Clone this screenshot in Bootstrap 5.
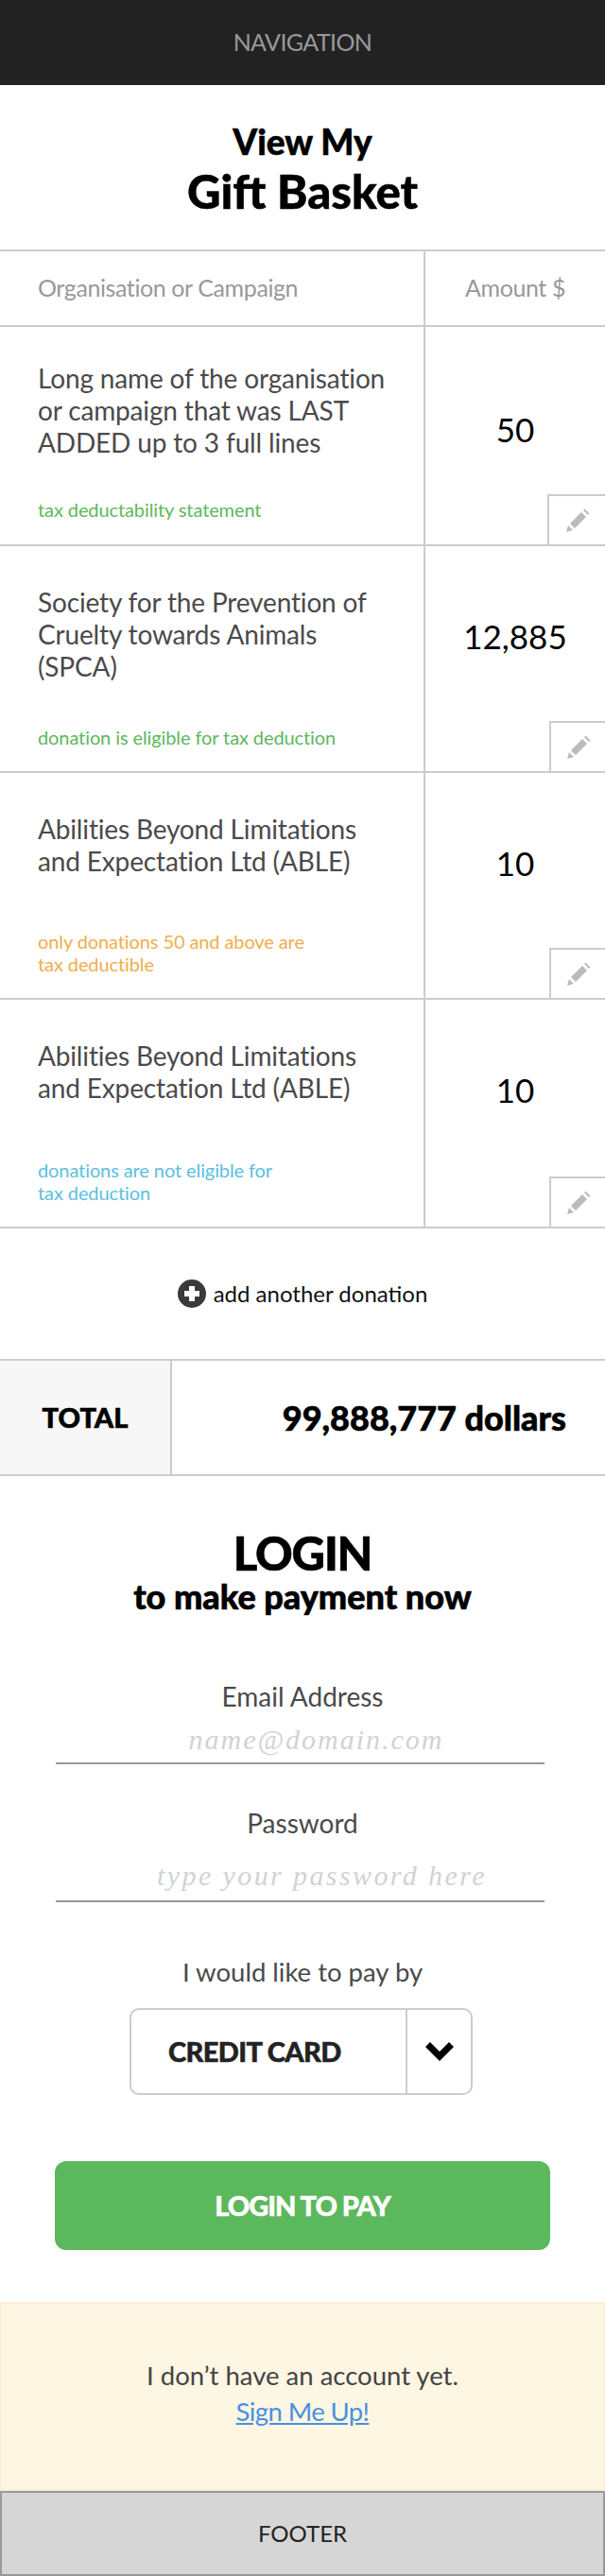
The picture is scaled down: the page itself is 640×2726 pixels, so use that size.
<!DOCTYPE html>
<html lang="en">

<head>
    <meta charset="UTF-8">
    <meta name="viewport" content="width=device-width, initial-scale=1.0">
    <title>View My Gift Basket</title>
    <link href="https://cdn.jsdelivr.net/npm/bootstrap@5.3.0/dist/css/bootstrap.min.css" rel="stylesheet">
    <style>
        body {
            font-family: Lato, "Liberation Sans", sans-serif;
            color: #4a4a4a;
            background: #fff;
        }

        .top-bar {
            height: 90px;
            background: #222;
            color: #999;
            font-size: 25px;
            letter-spacing: -.6px;
        }

        .basket-title {
            height: 174px;
            padding-top: 41px;
            color: #000;
            font-weight: 900;
            line-height: 1;
            -webkit-text-stroke: .5px #000;
        }

        .basket-title .line-one {
            font-size: 37px;
            margin-bottom: 10px;
        }

        .basket-title .line-two {
            font-size: 49px;
        }

        .basket-row {
            display: flex;
            border-bottom: 2px solid #ccc;
        }

        .basket-head {
            height: 82px;
            border-top: 2px solid #ccc;
            color: #999;
            font-size: 25px;
            letter-spacing: -.4px;
        }

        .cell-name {
            width: 450px;
            flex: none;
            padding: 42px 30px 24px 40px;
            border-right: 2px solid #ccc;
            display: flex;
            flex-direction: column;
            justify-content: space-between;
        }

        .basket-head .cell-name {
            padding: 0 0 0 40px;
            justify-content: center;
        }

        .cell-amount {
            flex: 1;
            position: relative;
            text-align: center;
            color: #000;
            font-size: 35px;
            line-height: 44px;
            padding-top: 73px;
        }

        .basket-head .cell-amount {
            color: #999;
            font-size: 25px;
            line-height: 1;
            padding-top: 26px;
        }

        .row-first {
            height: 232px;
        }

        .row-first .cell-name {
            padding-top: 37px;
            padding-bottom: 25px;
        }

        .row-first .cell-amount {
            padding-top: 86px;
        }

        .row-tall {
            height: 240px;
        }

        .row-last {
            height: 242px;
        }

        .org-name {
            font-size: 28px;
            line-height: 34px;
            letter-spacing: -.15px;
        }

        .tax-note {
            font-size: 20px;
            line-height: 24px;
            letter-spacing: -.1px;
        }

        .note-green {
            color: #5cb85c;
        }

        .note-orange {
            color: #f0ad4e;
        }

        .note-blue {
            color: #5bc0de;
        }

        .edit-box {
            position: absolute;
            right: 0;
            bottom: 0;
            width: 59px;
            height: 53px;
            border-top: 2px solid #ccc;
            border-left: 2px solid #ccc;
        }

        .row-first .edit-box {
            width: 61px;
        }

        .add-line {
            height: 138px;
            color: #111;
            font-size: 24px;
        }

        .total-row {
            height: 124px;
            border-top: 2px solid #ccc;
            border-bottom: 2px solid #ccc;
            color: #000;
            font-weight: 900;
            -webkit-text-stroke: .6px #000;
        }

        .total-label {
            width: 182px;
            background: #f7f7f7;
            border-right: 2px solid #ccc;
            font-size: 29px;
        }

        .total-value {
            font-size: 36px;
            padding-right: 41px;
        }

        .login-box {
            padding: 0 59px 55px;
            text-align: center;
        }

        .login-title {
            padding-top: 57px;
            margin-bottom: 72px;
            color: #000;
            font-weight: 900;
            line-height: 1;
            -webkit-text-stroke: .6px #000;
        }

        .login-title .line-one {
            font-size: 49px;
            letter-spacing: -1.2px;
            margin-bottom: 3px;
        }

        .login-title .line-two {
            font-size: 36px;
        }

        .field-label {
            font-size: 28px;
            line-height: 32px;
            margin-bottom: 0;
            display: block;
        }

        .hand-input.form-control {
            width: 517px;
            height: 56px;
            border: 0;
            border-bottom: 2px solid #999;
            border-radius: 0;
            box-shadow: none;
            padding: 6px 0 0 34px;
            text-align: center;
            font-family: "Liberation Serif", serif;
            font-style: italic;
            font-size: 30px;
            letter-spacing: 2px;
        }

        .hand-input.form-control::placeholder {
            color: #cfd4d2;
            opacity: 1;
        }

        .hand-input.input-second.form-control {
            height: 68px;
            padding: 14px 0 0 46px;
            letter-spacing: 2.4px;
        }

        .field-password {
            margin-top: 46px;
        }

        .field-pay {
            margin-top: 58px;
            font-size: 27.5px;
        }

        .pay-select {
            width: 363px;
            height: 92px;
            margin: 22px 0 0 78px;
            border: 2px solid #ccc;
            border-radius: 10px;
            color: #222;
            font-size: 29px;
            font-weight: 900;
            letter-spacing: -.6px;
            text-align: left;
        }

        .pay-select .select-text {
            flex: 1;
            padding-left: 39px;
            -webkit-text-stroke: .5px #222;
        }

        .pay-select .select-arrow {
            width: 69px;
            align-self: stretch;
            border-left: 2px solid #ccc;
        }

        .btn.pay-btn {
            width: 524px;
            height: 94px;
            margin: 70px 0 0 -1px;
            background: #5cb85c;
            border: 0;
            border-radius: 12px;
            color: #fff;
            font-size: 29px;
            font-weight: 900;
            letter-spacing: -1px;
            -webkit-text-stroke: .5px #fff;
        }

        .signup-box {
            height: 200px;
            padding-bottom: 6px;
            background: #fdf6e3;
            border: 2px solid #fbeed5;
            font-size: 27.5px;
            line-height: 38px;
            color: #444;
        }

        .signup-box a {
            color: #4a90e2;
            letter-spacing: -.6px;
        }

        .bottom-bar {
            height: 90px;
            background: #d6d6d6;
            border: 2px solid #999;
            color: #222;
            font-size: 24px;
        }
    </style>
</head>

<body>
    <!-- Navigation -->
    <div class="top-bar d-flex align-items-center justify-content-center">NAVIGATION</div>

    <div class="basket-title text-center">
        <div class="line-one">View My</div>
        <div class="line-two">Gift Basket</div>
    </div>

    <!-- Basket -->
    <div class="basket-row basket-head">
        <div class="cell-name">Organisation or Campaign</div>
        <div class="cell-amount">Amount $</div>
    </div>

    <div class="basket-row row-first">
        <div class="cell-name">
            <div class="org-name">Long name of the organisation or campaign that was LAST ADDED up to 3 full lines</div>
            <div class="tax-note note-green">tax deductability statement</div>
        </div>
        <div class="cell-amount">50
            <div class="edit-box d-flex align-items-center justify-content-center">
                <svg width="26" height="26" viewBox="0 0 26 26"><path fill="#bbb" d="M1 25l2-7 5 5zM5 16L17 4l5 5L10 21zM19 2l1.500-1.500 5 5L24 7z"/></svg>
            </div>
        </div>
    </div>

    <div class="basket-row row-tall">
        <div class="cell-name">
            <div class="org-name">Society for the Prevention of Cruelty towards Animals (SPCA)</div>
            <div class="tax-note note-green">donation is eligible for tax deduction</div>
        </div>
        <div class="cell-amount">12,885
            <div class="edit-box d-flex align-items-center justify-content-center">
                <svg width="26" height="26" viewBox="0 0 26 26"><path fill="#bbb" d="M1 25l2-7 5 5zM5 16L17 4l5 5L10 21zM19 2l1.500-1.500 5 5L24 7z"/></svg>
            </div>
        </div>
    </div>

    <div class="basket-row row-tall">
        <div class="cell-name">
            <div class="org-name">Abilities Beyond Limitations and Expectation Ltd (ABLE)</div>
            <div class="tax-note note-orange">only donations 50 and above are<br>tax deductible</div>
        </div>
        <div class="cell-amount">10
            <div class="edit-box d-flex align-items-center justify-content-center">
                <svg width="26" height="26" viewBox="0 0 26 26"><path fill="#bbb" d="M1 25l2-7 5 5zM5 16L17 4l5 5L10 21zM19 2l1.500-1.500 5 5L24 7z"/></svg>
            </div>
        </div>
    </div>

    <div class="basket-row row-last">
        <div class="cell-name">
            <div class="org-name">Abilities Beyond Limitations and Expectation Ltd (ABLE)</div>
            <div class="tax-note note-blue">donations are not eligible for<br>tax deduction</div>
        </div>
        <div class="cell-amount">10
            <div class="edit-box d-flex align-items-center justify-content-center">
                <svg width="26" height="26" viewBox="0 0 26 26"><path fill="#bbb" d="M1 25l2-7 5 5zM5 16L17 4l5 5L10 21zM19 2l1.500-1.500 5 5L24 7z"/></svg>
            </div>
        </div>
    </div>

    <div class="add-line d-flex align-items-center justify-content-center gap-2">
        <svg width="30" height="30" viewBox="0 0 30 30"><circle cx="15" cy="15" r="15" fill="#3a3a3a"/><path fill="#fff" d="M12 7h6v5h5v6h-5v5h-6v-5H7v-6h5z"/></svg>
        <span>add another donation</span>
    </div>

    <div class="total-row d-flex">
        <div class="total-label d-flex align-items-center justify-content-center">TOTAL</div>
        <div class="total-value flex-grow-1 d-flex align-items-center justify-content-end">99,888,777 dollars</div>
    </div>

    <!-- Login -->
    <div class="login-box">
        <div class="login-title">
            <div class="line-one">LOGIN</div>
            <div class="line-two">to make payment now</div>
        </div>
        <form>
            <label class="field-label">Email Address</label>
            <input type="text" class="form-control hand-input" placeholder="name@domain.com">
            <label class="field-label field-password">Password</label>
            <input type="text" class="form-control hand-input input-second" placeholder="type your password here">
            <label class="field-label field-pay">I would like to pay by</label>
            <div class="pay-select d-flex align-items-center">
                <div class="select-text">CREDIT CARD</div>
                <div class="select-arrow d-flex align-items-center justify-content-center">
                    <svg width="32" height="22" viewBox="0 0 32 22"><path fill="#000" d="M6 1l10 10L26 1l5 5L16 21 1 6z"/></svg>
                </div>
            </div>
            <button type="button" class="btn pay-btn">LOGIN TO PAY</button>
        </form>
    </div>

    <div class="signup-box d-flex flex-column align-items-center justify-content-center">
        <div>I don’t have an account yet.</div>
        <a href="#">Sign Me Up!</a>
    </div>

    <div class="bottom-bar d-flex align-items-center justify-content-center">FOOTER</div>
</body>

</html>
